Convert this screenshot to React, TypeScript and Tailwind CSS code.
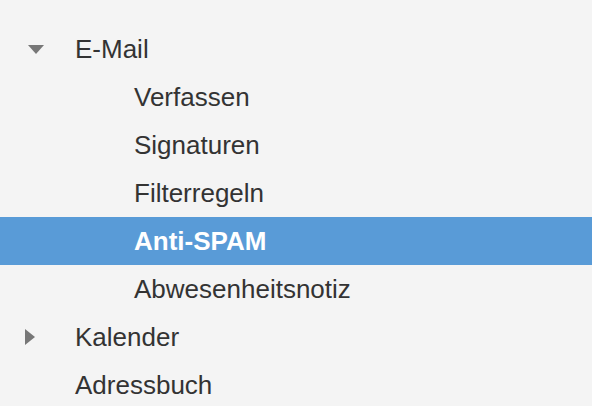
import React from 'react'

type Item = {
  label: string
  level: 0 | 1
  caret?: 'down' | 'right'
  active?: boolean
}

const items: Item[] = [
  { label: 'E-Mail', level: 0, caret: 'down' },
  { label: 'Verfassen', level: 1 },
  { label: 'Signaturen', level: 1 },
  { label: 'Filterregeln', level: 1 },
  { label: 'Anti-SPAM', level: 1, active: true },
  { label: 'Abwesenheitsnotiz', level: 1 },
  { label: 'Kalender', level: 0, caret: 'right' },
  { label: 'Adressbuch', level: 0 },
]

const Caret = ({ dir }: { dir: 'down' | 'right' }) => {
  if (dir === 'down') {
    return (
      <svg width="16" height="9" viewBox="0 0 16 9" className="ml-[28px]">
        <polygon points="0,0 16,0 8,9" fill="#777777" />
      </svg>
    )
  }
  return (
    <svg width="10" height="16" viewBox="0 0 10 16" className="ml-[25px]">
      <polygon points="0,0 10,8 0,16" fill="#777777" />
    </svg>
  )
}

const App = () => {
  return (
    <div
      className="w-[592px] h-[406px] overflow-hidden bg-[#f4f4f4] pt-[25px]"
      style={{ fontFamily: '"Liberation Sans", Arial, sans-serif' }}
    >
      {items.map((item) => (
        <div
          key={item.label}
          className={`relative flex items-center h-12 ${item.active ? 'bg-[#599bd7]' : ''}`}
        >
          {item.caret && (
            <div className="absolute left-0 top-0 h-12 flex items-center">
              <Caret dir={item.caret} />
            </div>
          )}
          <span
            className={`text-[26px] leading-none ${item.level === 0 ? 'pl-[75px]' : 'pl-[134px]'} ${
              item.active ? 'text-white font-bold' : 'text-[#333333]'
            }`}
          >
            {item.label}
          </span>
        </div>
      ))}
    </div>
  )
}

export default App
